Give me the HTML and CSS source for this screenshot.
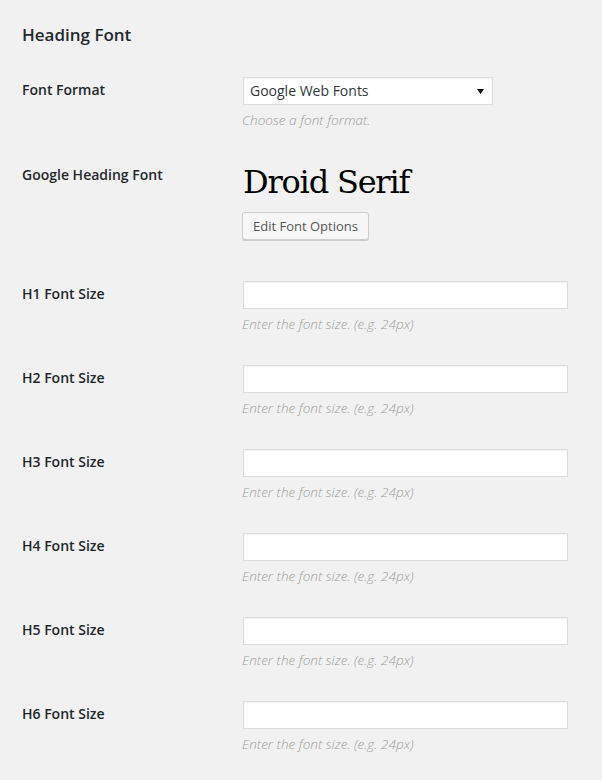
FILE: index.html
```html
<!DOCTYPE html>
<html lang="en">
<head>
<meta charset="utf-8">
<title>Heading Font</title>
<link rel="stylesheet" href="styles.css">
</head>
<body>
<div class="page">
  <h3 class="section-title">Heading Font</h3>
  <div class="form">
    <div class="row row-format">
      <div class="label">Font Format</div>
      <div class="field">
        <div class="select">
          <span class="select-text">Google Web Fonts</span>
          <svg class="select-arrow" width="7" height="5" viewBox="0 0 7 5"><path d="M0 0H7L3.5 5Z" fill="#000"/></svg>
        </div>
        <p class="description">Choose a font format.</p>
      </div>
    </div>
    <div class="row row-font">
      <div class="label">Google Heading Font</div>
      <div class="field">
        <div class="font-preview">Droid Serif</div>
        <button class="button" type="button">Edit Font Options</button>
      </div>
    </div>
    <div class="row">
      <div class="label">H1 Font Size</div>
      <div class="field">
        <input class="text-input" type="text">
        <p class="description">Enter the font size. (e.g. 24px)</p>
      </div>
    </div>
    <div class="row">
      <div class="label">H2 Font Size</div>
      <div class="field">
        <input class="text-input" type="text">
        <p class="description">Enter the font size. (e.g. 24px)</p>
      </div>
    </div>
    <div class="row">
      <div class="label">H3 Font Size</div>
      <div class="field">
        <input class="text-input" type="text">
        <p class="description">Enter the font size. (e.g. 24px)</p>
      </div>
    </div>
    <div class="row">
      <div class="label">H4 Font Size</div>
      <div class="field">
        <input class="text-input" type="text">
        <p class="description">Enter the font size. (e.g. 24px)</p>
      </div>
    </div>
    <div class="row">
      <div class="label">H5 Font Size</div>
      <div class="field">
        <input class="text-input" type="text">
        <p class="description">Enter the font size. (e.g. 24px)</p>
      </div>
    </div>
    <div class="row">
      <div class="label">H6 Font Size</div>
      <div class="field">
        <input class="text-input" type="text">
        <p class="description">Enter the font size. (e.g. 24px)</p>
      </div>
    </div>
  </div>
</div>
</body>
</html>
```

FILE: styles.css
```css
html, body {
  margin: 0;
  padding: 0;
  background: #f1f1f1;
}

body {
  font-family: "Open Sans", "Noto Sans", sans-serif;
  color: #23282d;
  font-size: 13px;
}

.page {
  padding: 0 0 0 22px;
}

.section-title {
  margin: 0;
  padding-top: 24px;
  height: 61px;
  box-sizing: border-box;
  font-size: 17px;
  font-weight: 600;
  line-height: 22px;
  color: #23282d;
}

.form {
  display: flex;
  flex-direction: column;
}

.row {
  display: grid;
  grid-template-columns: 220px 330px;
}

.label {
  padding-top: 20px;
  font-size: 14px;
  font-weight: 600;
  line-height: 18px;
  color: #23282d;
}

.field {
  padding: 16px 0 15px;
  display: flex;
  flex-direction: column;
  align-items: flex-start;
}

.row-format .field {
  padding-bottom: 16px;
}

.select {
  box-sizing: border-box;
  margin-left: 1px;
  width: 250px;
  height: 28px;
  background: #fff;
  border: 1px solid #ddd;
  box-shadow: inset 0 1px 2px rgba(0, 0, 0, 0.07);
  display: flex;
  align-items: center;
  justify-content: space-between;
  padding: 0 8px 0 6px;
  font-size: 14px;
  color: #32373c;
}

.select-text {
  line-height: 20px;
}

.select-arrow {
  display: block;
  margin-top: 1px;
}

.description {
  margin: 5px 0 0;
  font-size: 13.6px;
  line-height: 20px;
  font-style: italic;
  font-weight: 300;
  color: #a0a0a0;
}

.text-input {
  box-sizing: border-box;
  display: block;
  margin: 0 0 0 1px;
  width: 325px;
  height: 28px;
  background: #fff;
  border: 1px solid #ddd;
  box-shadow: inset 0 1px 2px rgba(0, 0, 0, 0.07);
  padding: 3px 5px;
  font-family: inherit;
  font-size: 14px;
}

.font-preview {
  margin-left: 1px;
  font-family: "DejaVu Serif", "Liberation Serif", serif;
  font-size: 32px;
  letter-spacing: -1.2px;
  line-height: 40px;
  color: #000;
}

.row-font .field {
  padding-bottom: 25px;
}

.button {
  margin: 10px 0 0 0;
  box-sizing: border-box;
  height: 28px;
  padding: 0 10px 1px;
  border: 1px solid #ccc;
  border-radius: 3px;
  background: #f7f7f7;
  box-shadow: 0 1px 0 #ccc;
  font-family: inherit;
  font-size: 13px;
  line-height: 26px;
  color: #555;
}
```
